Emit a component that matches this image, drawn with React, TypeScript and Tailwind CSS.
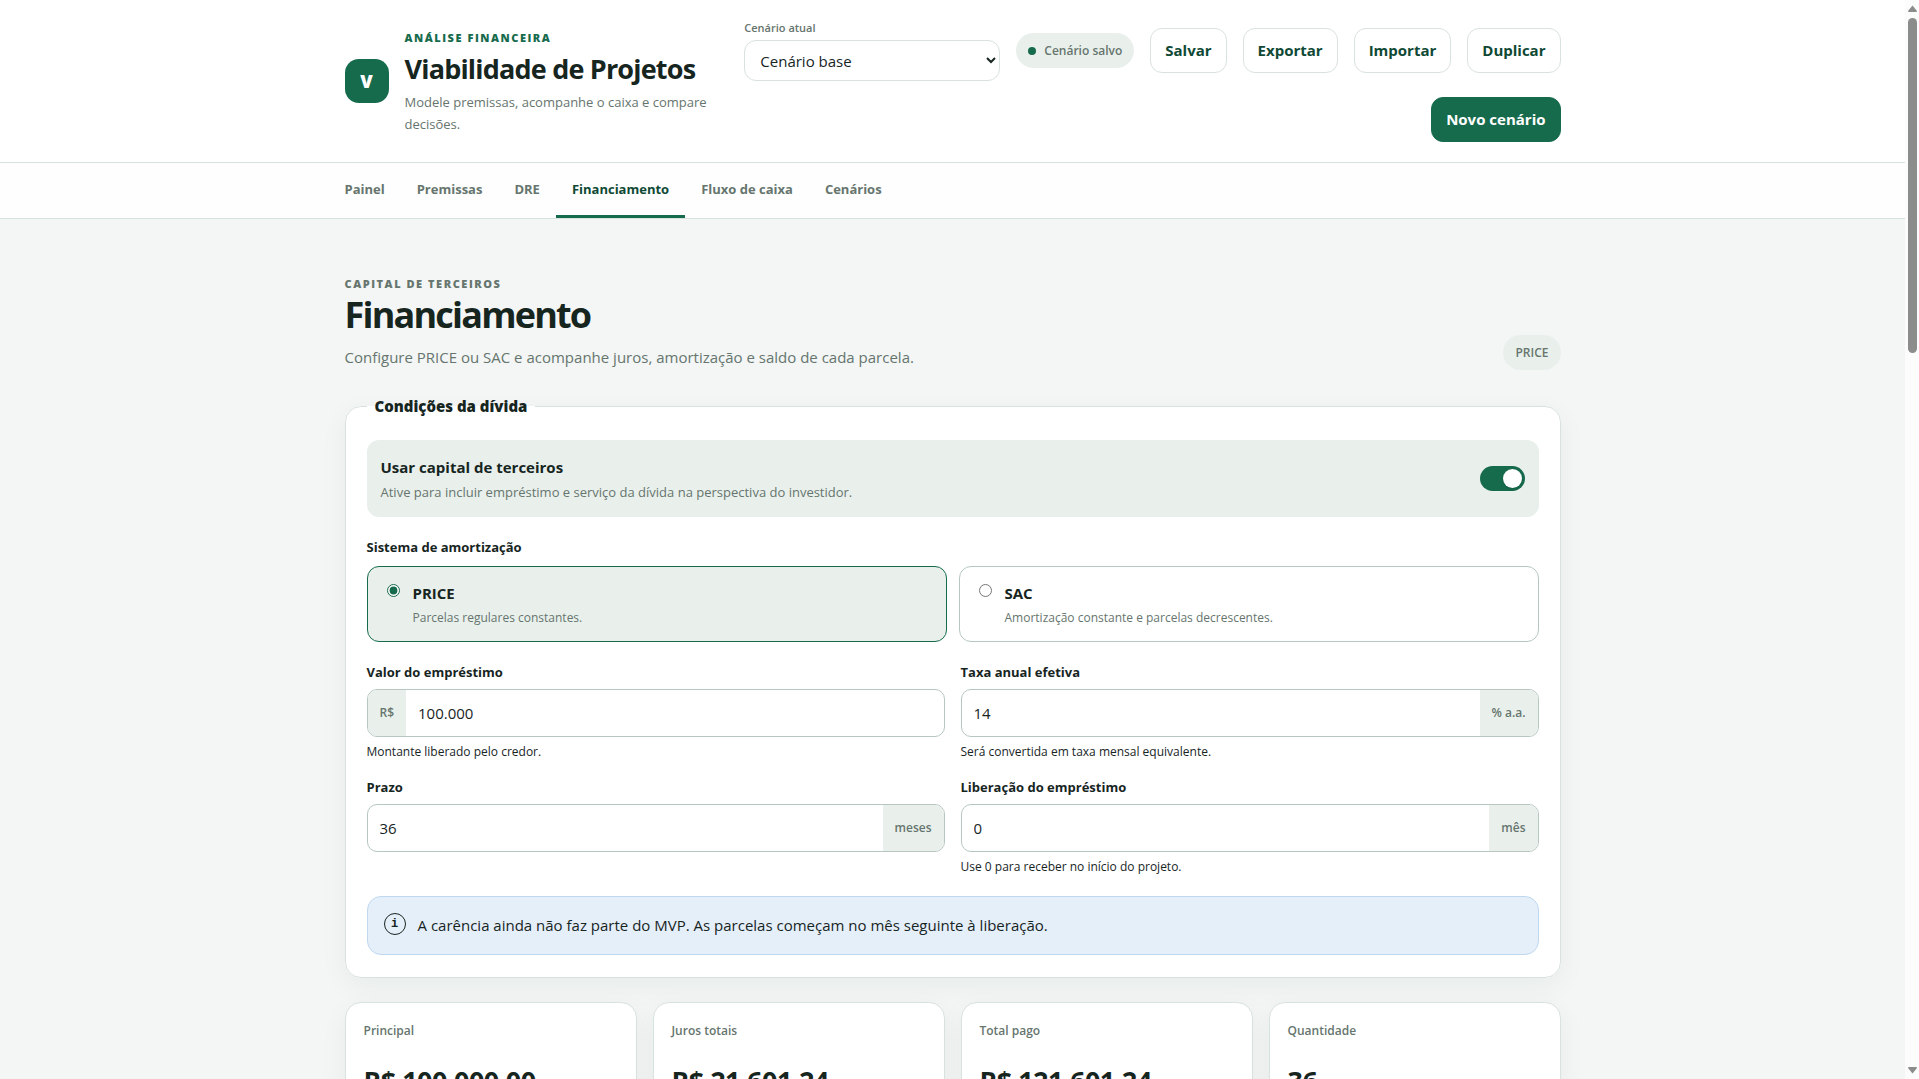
import { ReactNode } from "react";
import clsx from "clsx";

const navItems = [
  "Painel",
  "Premissas",
  "DRE",
  "Financiamento",
  "Fluxo de caixa",
  "Cenários",
];

const summary = [
  { label: "Principal", value: "R$ 100.000,00" },
  { label: "Juros totais", value: "R$ 21.601,24" },
  { label: "Total pago", value: "R$ 121.601,24" },
  { label: "Quantidade", value: "36" },
];

function Button({
  children,
  primary = false,
}: {
  children: ReactNode;
  primary?: boolean;
}) {
  return (
    <button
      type="button"
      className={clsx(
        "h-[45px] rounded-xl border px-[14px] text-[15px] font-bold",
        primary
          ? "border-[#176b4d] bg-[#176b4d] text-white"
          : "border-[#d8e2de] bg-white text-[#0f4935]",
      )}
    >
      {children}
    </button>
  );
}

function Pill({ children }: { children: ReactNode }) {
  return (
    <span className="flex h-[35px] items-center gap-2 rounded-full bg-[#e9f0ec] px-3 text-xs font-semibold text-[#66756e]">
      {children}
    </span>
  );
}

function Header() {
  return (
    <header className="border-b border-[#d8e2de] bg-white">
      <div className="mx-auto flex max-w-[1280px] items-center gap-4 px-8 py-5">
        <div className="flex flex-1 items-center gap-4">
          <div className="grid size-11 shrink-0 place-items-center rounded-[14px] bg-[#176b4d] text-lg font-extrabold text-white">
            V
          </div>
          <div className="pt-0.5">
            <p className="text-[11px] leading-4 font-extrabold tracking-[0.14em] text-[#176b4d] uppercase">
              Análise financeira
            </p>
            <h1 className="mt-[5px] text-[27px] leading-9 font-bold tracking-[-0.03em]">
              Viabilidade de Projetos
            </h1>
            <p className="mt-1 text-[13px] leading-[22px] text-[#66756e]">
              Modele premissas, acompanhe o caixa e compare decisões.
            </p>
          </div>
        </div>

        <div className="flex w-[824px] flex-wrap items-center justify-end gap-4">
          <label className="grid gap-1 text-[11px] leading-4 font-semibold text-[#66756e]">
            Cenário atual
            <select className="h-[41px] w-64 rounded-xl border border-[#d8e2de] bg-white px-[11px] text-[15px] font-normal text-[#17251f]">
              <option>Cenário base</option>
            </select>
          </label>
          <Pill>
            <span className="size-2 rounded-full bg-[#176b4d]" />
            Cenário salvo
          </Pill>
          <Button>Salvar</Button>
          <Button>Exportar</Button>
          <Button>Importar</Button>
          <Button>Duplicar</Button>
          <Button primary>Novo cenário</Button>
        </div>
      </div>
    </header>
  );
}

function Nav() {
  return (
    <nav className="border-b border-[#d8e2de] bg-[#fdfefd]">
      <div className="mx-auto flex max-w-[1280px] px-4">
        {navItems.map((item) => (
          <a
            key={item}
            href="#"
            className={clsx(
              "h-[55px] border-b-3 px-4 pt-[15px] text-[13px] leading-[22px] font-bold",
              item === "Financiamento"
                ? "border-[#176b4d] text-[#0f4935]"
                : "border-transparent text-[#66756e]",
            )}
          >
            {item}
          </a>
        ))}
      </div>
    </nav>
  );
}

function SystemOption({
  title,
  text,
  checked = false,
}: {
  title: string;
  text: string;
  checked?: boolean;
}) {
  return (
    <label
      className={clsx(
        "flex items-start gap-[13px] rounded-xl border px-[19px] pt-[15px] pb-3",
        checked
          ? "border-[#176b4d] bg-[#e9f0ec]"
          : "border-[#b6c7c0] bg-white",
      )}
    >
      <input
        type="radio"
        name="system"
        defaultChecked={checked}
        className="mt-0.5 size-[13px] accent-[#176b4d]"
      />
      <span>
        <strong className="block text-[15px] leading-[22px]">{title}</strong>
        <span className="mt-[3px] block text-xs leading-[22px] text-[#66756e]">
          {text}
        </span>
      </span>
    </label>
  );
}

function Field({
  id,
  label,
  value,
  prefix,
  suffix,
  hint,
}: {
  id: string;
  label: string;
  value: string;
  prefix?: string;
  suffix?: string;
  hint?: string;
}) {
  return (
    <div>
      <label htmlFor={id} className="block text-[13px] leading-5 font-bold">
        {label}
      </label>
      <div className="mt-[7px] flex h-12 overflow-hidden rounded-[10px] border border-[#b6c7c0] bg-white">
        {prefix && (
          <span className="flex items-center bg-[#e9f0ec] px-3 text-xs font-semibold text-[#66756e]">
            {prefix}
          </span>
        )}
        <input
          id={id}
          defaultValue={value}
          className="min-w-0 flex-1 px-3 text-[15px] outline-none"
        />
        {suffix && (
          <span className="flex items-center bg-[#e9f0ec] px-3 text-xs font-semibold text-[#66756e]">
            {suffix}
          </span>
        )}
      </div>
      {hint && <p className="mt-[5px] text-xs leading-5">{hint}</p>}
    </div>
  );
}

function DebtForm() {
  return (
    <fieldset className="rounded-2xl border border-[#d8e2de] bg-white px-[21px] pt-[21px] pb-[22px] shadow-[0_8px_28px_rgba(23,37,31,0.05)]">
      <legend className="px-2 text-[15px] leading-[26px] font-extrabold">
        Condições da dívida
      </legend>

      <label className="flex h-[77px] items-center justify-between rounded-xl bg-[#e9f0ec] px-[14px]">
        <span>
          <strong className="block text-[15px] leading-[26px]">
            Usar capital de terceiros
          </strong>
          <span className="block text-[13px] leading-6 text-[#66756e]">
            Ative para incluir empréstimo e serviço da dívida na perspectiva do
            investidor.
          </span>
        </span>
        <input type="checkbox" defaultChecked className="sr-only" />
        <span className="flex h-[25px] w-[45px] justify-end rounded-full bg-[#176b4d] p-[3px]">
          <span className="size-[19px] rounded-full bg-white shadow-sm" />
        </span>
      </label>

      <p className="mt-5 text-[13px] leading-5 font-bold">
        Sistema de amortização
      </p>
      <div className="mt-[9px] grid grid-cols-2 gap-3">
        <SystemOption
          title="PRICE"
          text="Parcelas regulares constantes."
          checked
        />
        <SystemOption
          title="SAC"
          text="Amortização constante e parcelas decrescentes."
        />
      </div>

      <div className="mt-5 grid grid-cols-2 gap-x-4 gap-y-[15px]">
        <Field
          id="amount"
          label="Valor do empréstimo"
          value="100.000"
          prefix="R$"
          hint="Montante liberado pelo credor."
        />
        <Field
          id="rate"
          label="Taxa anual efetiva"
          value="14"
          suffix="% a.a."
          hint="Será convertida em taxa mensal equivalente."
        />
        <Field id="term" label="Prazo" value="36" suffix="meses" />
        <Field
          id="release"
          label="Liberação do empréstimo"
          value="0"
          suffix="mês"
          hint="Use 0 para receber no início do projeto."
        />
      </div>

      <div className="mt-[19px] flex h-[59px] items-start gap-3 rounded-[14px] border border-[#bfd8f0] bg-[#e5effa] p-4">
        <span className="grid size-[22px] shrink-0 place-items-center rounded-full border border-[#17251f] font-['Liberation_Mono',monospace] text-xs font-bold">
          i
        </span>
        <p className="text-[15px] leading-6">
          A carência ainda não faz parte do MVP. As parcelas começam no mês
          seguinte à liberação.
        </p>
      </div>
    </fieldset>
  );
}

function Scrollbar() {
  return (
    <div className="flex w-3.5 shrink-0 flex-col items-center bg-[#fcfcfc] py-[5px]">
      <svg className="h-2 w-[9px] shrink-0" viewBox="0 0 9 8">
        <path d="M4.5 0.5 L9 6 Q9 7 8 7 H1 Q0 7 0 6 Z" fill="#8b8d8c" />
      </svg>
      <div className="mt-[5px] h-[335px] w-[9px] rounded-full bg-[#8b8d8c]" />
      <svg className="mt-auto h-2 w-[9px] shrink-0" viewBox="0 0 9 8">
        <path d="M4.5 7.5 L9 2 Q9 1 8 1 H1 Q0 1 0 2 Z" fill="#8b8d8c" />
      </svg>
    </div>
  );
}

export default function App() {
  return (
    <div className="flex h-screen overflow-hidden bg-[#f3f6f5] font-['Open_Sans','Noto_Sans',sans-serif] text-[#17251f]">
      <div className="min-w-0 flex-1 overflow-hidden">
        <Header />
        <Nav />
        <main className="mx-auto max-w-[1280px] px-8 pt-[57px]">
          <div className="flex items-end justify-between">
            <div>
              <p className="text-[11px] leading-4 font-extrabold tracking-[0.14em] text-[#66756e] uppercase">
                Capital de terceiros
              </p>
              <h2 className="text-4xl leading-[46px] font-bold tracking-[-0.05em]">
                Financiamento
              </h2>
              <p className="mt-1.5 text-[15px] leading-[26px] text-[#66756e]">
                Configure PRICE ou SAC e acompanhe juros, amortização e saldo de
                cada parcela.
              </p>
            </div>
            <Pill>PRICE</Pill>
          </div>

          <div className="mt-[23px]">
            <DebtForm />
          </div>

          <div className="mt-6 grid grid-cols-4 gap-4">
            {summary.map((item) => (
              <article
                key={item.label}
                className="h-[150px] rounded-2xl border border-[#d8e2de] bg-white p-[18px] shadow-[0_8px_28px_rgba(23,37,31,0.05)]"
              >
                <p className="text-xs leading-5 font-semibold text-[#66756e]">
                  {item.label}
                </p>
                <strong className="mt-[22px] block text-[27px] leading-9 tracking-[-0.02em]">
                  {item.value}
                </strong>
              </article>
            ))}
          </div>
        </main>
      </div>
      <Scrollbar />
    </div>
  );
}
